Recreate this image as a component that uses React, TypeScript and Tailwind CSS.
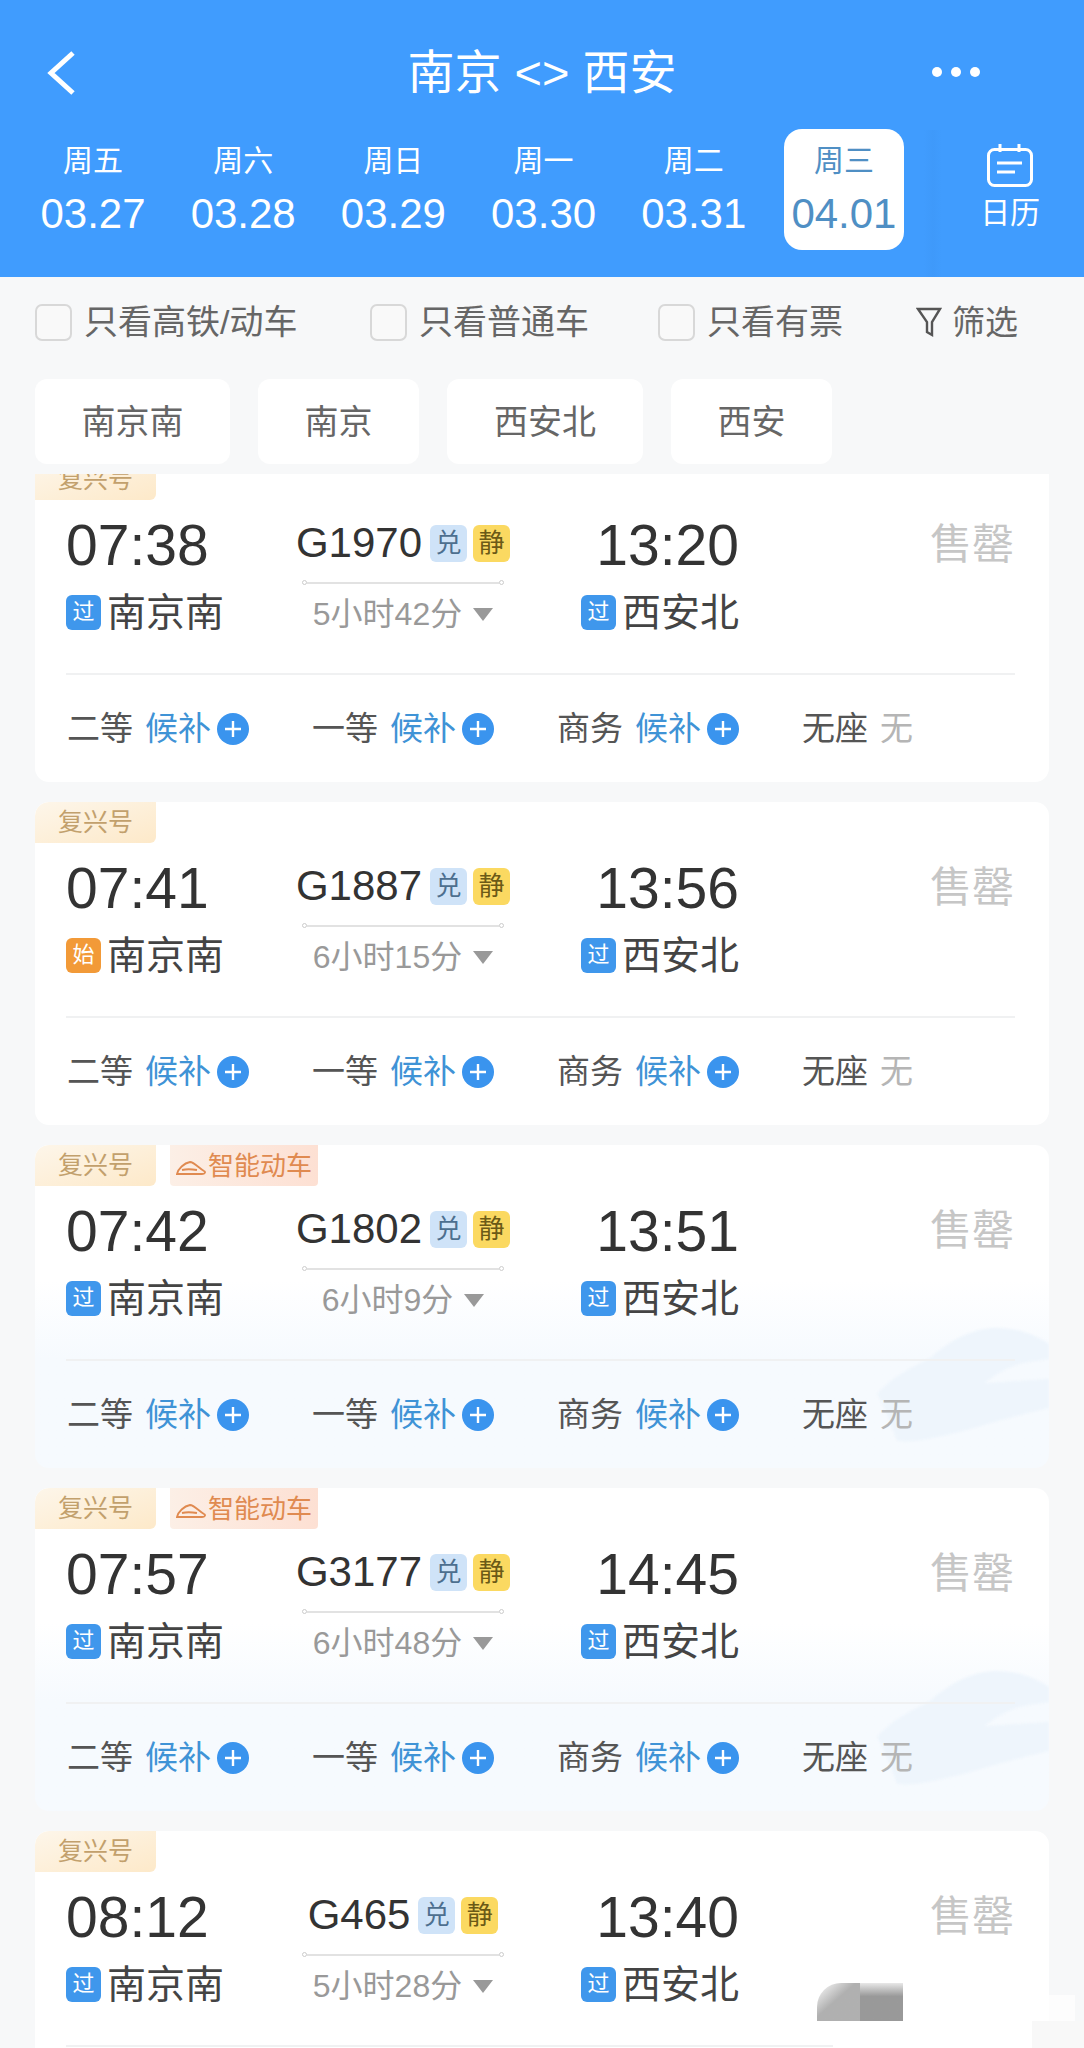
import React from "react";

const days = [
  { week: "周五", date: "03.27" },
  { week: "周六", date: "03.28" },
  { week: "周日", date: "03.29" },
  { week: "周一", date: "03.30" },
  { week: "周二", date: "03.31" },
  { week: "周三", date: "04.01", active: true },
];

type Train = {
  from: string;
  no: string;
  to: string;
  dur: string;
  start?: boolean;
  smart?: boolean;
};

const trains: Train[] = [
  { from: "07:38", no: "G1970", to: "13:20", dur: "5小时42分" },
  { from: "07:41", no: "G1887", to: "13:56", dur: "6小时15分", start: true },
  { from: "07:42", no: "G1802", to: "13:51", dur: "6小时9分", smart: true },
  { from: "07:57", no: "G3177", to: "14:45", dur: "6小时48分", smart: true },
  { from: "08:12", no: "G465", to: "13:40", dur: "5小时28分" },
];

const Plus = () => (
  <svg width="32" height="32" viewBox="0 0 32 32" className="ml-[6px] shrink-0">
    <circle cx="16" cy="16" r="16" fill="#3a94ee" />
    <path d="M8 16h16M16 8v16" stroke="#fff" strokeWidth="2.4" />
  </svg>
);

const Seat = ({ name }: { name: string }) => (
  <div className="flex items-center">
    <span className="text-[#555]">{name}</span>
    <span className="ml-[12px] text-[#3f93d6]">候补</span>
    <Plus />
  </div>
);

const StationBadge = ({ start }: { start?: boolean }) => (
  <span
    className={`flex h-[35px] w-[35px] shrink-0 items-center justify-center rounded-[6px] text-[22px] leading-none text-white ${
      start ? "bg-[#f29a38]" : "bg-[#3f97ec]"
    }`}
  >
    {start ? "始" : "过"}
  </span>
);

const Card = ({ t }: { t: Train }) => (
  <div
    className={`relative h-[323px] shrink-0 overflow-hidden rounded-[14px] ${
      t.smart ? "bg-gradient-to-b from-white from-[42%] to-[#f6fafe] to-[66%]" : "bg-white"
    }`}
  >
    {t.smart && (
      <svg width="172" height="125" viewBox="0 0 172 125" className="absolute right-0 top-[176px] blur-[1px]">
        <path
          d="M0 73C14 56 36 46 53 37 72 20 94 8 116 7 136 6 156 12 172 23V38L146 42C130 46 118 54 108 62L172 58V87C130 96 92 110 56 117 44 120 30 121 20 120 14 104 8 86 0 73Z"
          fill="#eef5fc"
        />
      </svg>
    )}
    <div className="relative flex h-[323px] flex-col">
      <div className="flex h-[41px] shrink-0 gap-[14px]">
        <span className="flex w-[121px] items-center justify-center rounded-br-[6px] rounded-tl-[14px] bg-gradient-to-br from-[#fdf6ea] to-[#fde9c9] text-[25px] leading-none text-[#c2a06c]">
          复兴号
        </span>
        {t.smart && (
          <span className="flex w-[148px] items-center justify-center rounded-b-[4px] bg-gradient-to-r from-[#fcefe6] to-[#fde0d3] text-[26px] leading-none text-[#e08a50]">
            <svg width="30" height="14" viewBox="0 0 30 14" className="mr-[2px] mt-[4px]">
              <path
                d="M1 13C2 8 8 2 14 1c4 0 9 6 14 9 2 1 1 3-2 3Z"
                fill="none"
                stroke="#e08a50"
                strokeWidth="1.8"
              />
              <path d="M6 9c4-1 9-1 15 0" fill="none" stroke="#e08a50" strokeWidth="2" />
            </svg>
            智能动车
          </span>
        )}
      </div>

      <div className="flex h-[134px] shrink-0 pl-[31px] pr-[35px] pt-[21px]">
        <div className="w-[192px] shrink-0">
          <div className="h-[48px] whitespace-nowrap text-[57px] leading-[48px] text-[#333]">{t.from}</div>
          <div className="mt-[21px] flex h-[44px] items-center gap-[6px]">
            <StationBadge start={t.start} />
            <span className="text-[39px] leading-none text-[#444]">南京南</span>
          </div>
        </div>

        <div className="flex w-[290px] shrink-0 flex-col items-center">
          <div className="flex h-[44px] items-center">
            <span className="text-[42px] leading-none text-[#333]">{t.no}</span>
            <span className="ml-[8px] flex h-[37px] w-[37px] items-center justify-center rounded-[6px] bg-[#cfe3f8] text-[26px] leading-none text-[#4d6f8f]">
              兑
            </span>
            <span className="ml-[6px] flex h-[37px] w-[37px] items-center justify-center rounded-[6px] bg-[#fbd961] text-[26px] leading-none text-[#6b5a17]">
              静
            </span>
          </div>
          <div className="mt-[15px] flex w-[202px] items-center">
            <span className="h-[5px] w-[5px] rounded-full border border-[#ccc]" />
            <span className="h-[2px] flex-1 bg-[#e2e2e2]" />
            <span className="h-[5px] w-[5px] rounded-full border border-[#ccc]" />
          </div>
          <div className="mt-[11px] flex h-[36px] items-center text-[32px] leading-none text-[#999]">
            {t.dur}
            <span className="ml-[11px] h-0 w-0 border-x-[10px] border-t-[13px] border-x-transparent border-t-[#999]" />
          </div>
        </div>

        <div className="flex w-[191px] shrink-0 flex-col items-end">
          <div className="h-[48px] whitespace-nowrap text-[57px] leading-[48px] text-[#333]">{t.to}</div>
          <div className="mt-[21px] flex h-[44px] items-center gap-[6px]">
            <StationBadge />
            <span className="text-[39px] leading-none text-[#444]">西安北</span>
          </div>
        </div>

        <div className="flex h-[47px] flex-1 items-center justify-end text-[42px] leading-none text-[#c6c6c6]">
          售罄
        </div>
      </div>

      <div className="ml-[31px] mr-[34px] mt-[39px] h-[2px] shrink-0 bg-[#f0f1f2]" />

      <div className="grid flex-1 grid-cols-[245px_245px_245px_1fr] items-center pl-[32px] text-[33px] leading-none">
        <Seat name="二等" />
        <Seat name="一等" />
        <Seat name="商务" />
        <div className="flex items-center">
          <span className="text-[#555]">无座</span>
          <span className="ml-[12px] text-[#b5b5b5]">无</span>
        </div>
      </div>
    </div>
  </div>
);

export default function App() {
  return (
    <div
      className="relative h-[2048px] w-[1084px] overflow-hidden bg-[#f7f8f9]"
      style={{ fontFamily: '"Liberation Sans", "Noto Sans CJK SC", sans-serif' }}
    >
      <header className="relative h-[277px] bg-[#409cfe] text-white">
        <div className="relative flex h-[129px] items-center justify-center pt-[15px]">
          <svg width="32" height="44" viewBox="0 0 32 44" className="absolute left-[45px] top-[51px]">
            <path d="M28 2 6 22l22 20" fill="none" stroke="#fff" strokeWidth="5" />
          </svg>
          <span className="text-[47px] leading-none">南京 &lt;&gt; 西安</span>
          <div className="absolute left-[932px] top-[67px] flex gap-[9px]">
            <span className="h-[10px] w-[10px] rounded-full bg-white" />
            <span className="h-[10px] w-[10px] rounded-full bg-white" />
            <span className="h-[10px] w-[10px] rounded-full bg-white" />
          </div>
        </div>
        <div className="flex pl-[33px]">
          {days.map((d) => (
            <div
              key={d.date}
              className={`mr-[30.2px] flex h-[121px] w-[120px] flex-col items-center pt-[15px] ${
                d.active ? "rounded-[18px] bg-white text-[#4f8fc4]" : ""
              }`}
            >
              <span className="text-[30px] leading-[34px]">{d.week}</span>
              <span className="mt-[12px] text-[42px] leading-[48px]">{d.date}</span>
            </div>
          ))}
          <div className="ml-[31px] flex w-[90px] flex-col items-center pt-[15px]">
            <svg width="46" height="43" viewBox="0 0 46 43">
              <rect x="1.5" y="5.5" width="43" height="36" rx="6" fill="none" stroke="#fff" strokeWidth="3" />
              <path d="M13 0v8M32 0v8M10 19h25M10 28h18" fill="none" stroke="#fff" strokeWidth="3" />
            </svg>
            <span className="mt-[6px] text-[30px] leading-[40px]">日历</span>
          </div>
        </div>
        <div className="absolute bottom-0 left-[924px] top-[130px] w-[18px] bg-gradient-to-r from-transparent via-[#3a91ee] to-transparent opacity-25" />
      </header>

      <div className="flex h-[90px] items-center pl-[35px] text-[34px] leading-none text-[#666]">
        <span className="h-[37px] w-[37px] shrink-0 rounded-[7px] border-2 border-[#d8d8d8] bg-[#f9f9f9]" />
        <span className="ml-[12px] w-[286px]">只看高铁/动车</span>
        <span className="h-[37px] w-[37px] shrink-0 rounded-[7px] border-2 border-[#d8d8d8] bg-[#f9f9f9]" />
        <span className="ml-[12px] w-[239px]">只看普通车</span>
        <span className="h-[37px] w-[37px] shrink-0 rounded-[7px] border-2 border-[#d8d8d8] bg-[#f9f9f9]" />
        <span className="ml-[12px] w-[209px]">只看有票</span>
        <svg width="26" height="32" viewBox="0 0 26 32">
          <path d="M2 3h22l-8 13v13l-5-3V16Z" fill="none" stroke="#555" strokeWidth="2.4" />
        </svg>
        <span className="ml-[10px] text-[33px]">筛选</span>
      </div>

      <div className="mt-[12px] flex h-[85px] gap-[28px] pl-[35px] text-[34px] leading-none text-[#666]">
        <span className="flex w-[195px] items-center justify-center rounded-[12px] bg-white">南京南</span>
        <span className="flex w-[161px] items-center justify-center rounded-[12px] bg-white">南京</span>
        <span className="flex w-[196px] items-center justify-center rounded-[12px] bg-white">西安北</span>
        <span className="flex w-[161px] items-center justify-center rounded-[12px] bg-white">西安</span>
      </div>

      <div className="mt-[10px] h-[1574px] overflow-hidden px-[35px]">
        <div className="-mt-[15px] flex flex-col gap-[20px]">
          {trains.map((t) => (
            <Card key={t.no} t={t} />
          ))}
        </div>
      </div>

      {/* smudge left over the bottom of the screenshot */}
      <div className="absolute left-[1049px] top-[1995px] h-[26px] w-[26px] bg-[#fdfdfd]" />
      <div className="absolute left-[833px] top-[2021px] h-[27px] w-[199px] bg-white" />
      <div className="absolute left-[1032px] top-[2021px] h-[27px] w-[52px] bg-[#f8f8f8]" />
      <div className="absolute left-[817px] top-[1983px] flex h-[38px] w-[86px]">
        <div className="h-full w-1/2 rounded-tl-[24px] bg-gradient-to-br from-white to-[#b0b0b0] to-[45%]" />
        <div className="h-full w-1/2 bg-gradient-to-b from-[#e8e8e8] to-[#999] to-[35%]" />
      </div>
    </div>
  );
}
